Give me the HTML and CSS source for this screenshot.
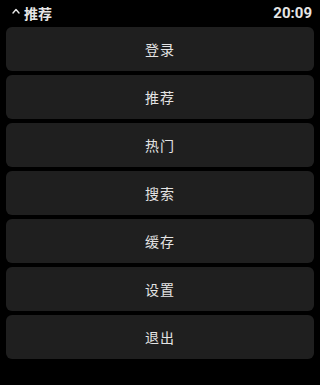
FILE: index.html
```html
<!DOCTYPE html>
<html lang="zh">
<head>
<meta charset="utf-8">
<link rel="stylesheet" href="styles.css">
</head>
<body>
<div class="screen">
  <header class="topbar">
    <div class="title">
      <svg class="chev" width="8" height="6" viewBox="0 0 8 6"><path d="M1 5 L4 1.5 L7 5" fill="none" stroke="#e8e8e8" stroke-width="1.4" stroke-linecap="round" stroke-linejoin="round"/></svg>
      <span>推荐</span>
    </div>
    <div class="time">20:09</div>
  </header>
  <nav class="menu">
    <div class="item">登录</div>
    <div class="item">推荐</div>
    <div class="item">热门</div>
    <div class="item">搜索</div>
    <div class="item">缓存</div>
    <div class="item">设置</div>
    <div class="item">退出</div>
  </nav>
</div>
</body>
</html>
```
FILE: styles.css
```css
html, body {
  margin: 0;
  padding: 0;
  background: #000;
}
.screen {
  width: 320px;
  height: 385px;
  background: #000;
  font-family: "Noto Sans CJK SC", "Noto Sans", sans-serif;
  color: #e6e6e6;
}
.topbar {
  height: 27px;
  display: flex;
  align-items: center;
  justify-content: space-between;
  padding: 0 8px 0 12px;
  box-sizing: border-box;
}
.title {
  display: flex;
  align-items: center;
  gap: 4px;
  font-size: 14px;
  font-weight: bold;
  margin-top: -2px;
}
.chev {
  margin-top: -4px;
}
.time {
  font-family: "Roboto", "Liberation Sans", sans-serif;
  font-size: 15px;
  font-weight: bold;
  margin-top: -2px;
}
.menu {
  display: flex;
  flex-direction: column;
  gap: 4px;
  padding: 0 6px;
}
.item {
  height: 44px;
  background: #1f1f1f;
  border-radius: 6px;
  display: flex;
  align-items: center;
  justify-content: center;
  font-size: 14px;
  letter-spacing: 1px;
  color: #e4e4e4;
}
```
